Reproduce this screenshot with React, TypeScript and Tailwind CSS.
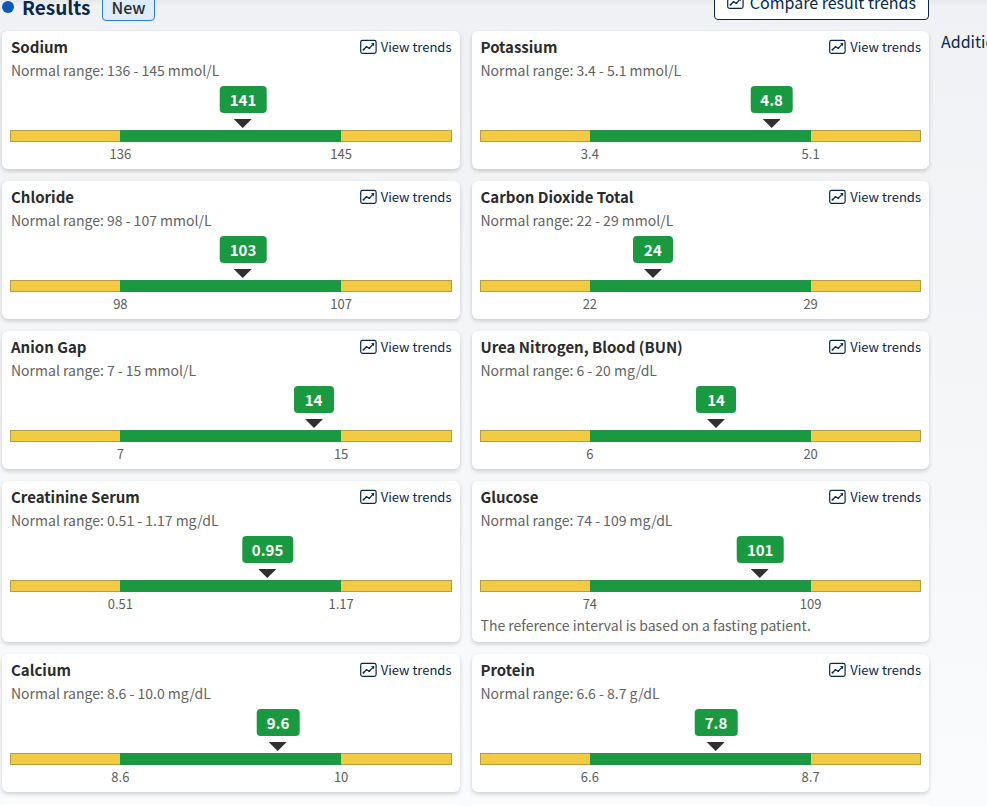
type LabResult = {
  name: string;
  low: number;
  high: number;
  value: number;
  unit: string;
  range: string;
  note?: string;
};

const RESULTS: LabResult[] = [
  { name: "Sodium", low: 136, high: 145, value: 141, unit: "mmol/L", range: "136 - 145" },
  { name: "Potassium", low: 3.4, high: 5.1, value: 4.8, unit: "mmol/L", range: "3.4 - 5.1" },
  { name: "Chloride", low: 98, high: 107, value: 103, unit: "mmol/L", range: "98 - 107" },
  { name: "Carbon Dioxide Total", low: 22, high: 29, value: 24, unit: "mmol/L", range: "22 - 29" },
  { name: "Anion Gap", low: 7, high: 15, value: 14, unit: "mmol/L", range: "7 - 15" },
  { name: "Urea Nitrogen, Blood (BUN)", low: 6, high: 20, value: 14, unit: "mg/dL", range: "6 - 20" },
  { name: "Creatinine Serum", low: 0.51, high: 1.17, value: 0.95, unit: "mg/dL", range: "0.51 - 1.17" },
  {
    name: "Glucose",
    low: 74,
    high: 109,
    value: 101,
    unit: "mg/dL",
    range: "74 - 109",
    note: "The reference interval is based on a fasting patient.",
  },
  { name: "Calcium", low: 8.6, high: 10, value: 9.6, unit: "mg/dL", range: "8.6 - 10.0" },
  { name: "Protein", low: 6.6, high: 8.7, value: 7.8, unit: "g/dL", range: "6.6 - 8.7" },
];

function TrendIcon() {
  return (
    <svg width="17" height="16" viewBox="0 0 17 16" fill="none" stroke="currentColor" aria-hidden="true" className="shrink-0">
      <rect x="0.7" y="1.4" width="15.4" height="13" rx="1.8" strokeWidth="1.2" />
      <path d="M3.4 10.8 6.5 7.8 9.3 9.2 13 5.4" strokeWidth="1.2" />
      <circle cx="3.5" cy="10.7" r="1" fill="currentColor" stroke="none" />
      <circle cx="6.5" cy="7.9" r="0.9" fill="currentColor" stroke="none" />
      <circle cx="9.3" cy="9.2" r="0.9" fill="currentColor" stroke="none" />
      <path d="m11 4.2 3.2-.2-.2 3.2Z" fill="currentColor" stroke="none" />
    </svg>
  );
}

function RangeBar({ low, high, value }: { low: number; high: number; value: number }) {
  // the normal range fills the middle half of the bar
  const position = 25 + ((value - low) / (high - low)) * 50;

  return (
    <div>
      <div className="flex w-fit -translate-x-1/2 flex-col items-center gap-1.5" style={{ marginLeft: `${position}%` }}>
        <span className="min-w-10 rounded bg-[#1a9a40] px-2.5 text-center text-[15px] leading-[27px] font-bold text-white">
          {value}
        </span>
        <svg width="18" height="9" viewBox="0 0 18 9" fill="#303030" aria-hidden="true">
          <path d="M0 0h18L9 9Z" />
        </svg>
      </div>
      <div className="mt-0.5 grid h-3 grid-cols-[1fr_2fr_1fr]">
        <div className="border border-r-0 border-[#b59d45] bg-[#f2cb43]" />
        <div className="border-y border-[#27904a] bg-[#1a9a40]" />
        <div className="border border-l-0 border-[#b59d45] bg-[#f2cb43]" />
      </div>
      <div className="mt-0.5 grid grid-cols-2 text-center text-[13px] leading-5 text-[#5c5c5c]">
        <span>{low}</span>
        <span>{high}</span>
      </div>
    </div>
  );
}

function ResultCard({ result }: { result: LabResult }) {
  return (
    <article className="rounded-md bg-white px-2 pt-1 pb-[5px] shadow-[0_2px_4px_rgba(0,0,0,0.18)]">
      <div className="flex items-center justify-between">
        <h2 className="pl-px text-[15px] leading-6 font-bold text-[#2b2b2b]">{result.name}</h2>
        <a href="#trends" className="flex items-center gap-1 text-[13px] leading-6 text-[#06284f]">
          <TrendIcon />
          View trends
        </a>
      </div>
      <p className="mb-1 pl-px text-sm leading-[23px] text-[#636363]">
        Normal range: {result.range} {result.unit}
      </p>
      <RangeBar low={result.low} high={result.high} value={result.value} />
      {result.note ? <p className="pl-px text-sm leading-[23px] text-[#636363]">{result.note}</p> : null}
    </article>
  );
}

export default function App() {
  return (
    <div className="min-h-screen overflow-hidden bg-linear-to-b from-[#eff1f4] to-[#f9fbfc] pl-0.5 font-['Noto_Sans_CJK_SC','Source_Sans_Pro',sans-serif]">
      <div className="-ml-0.5 h-1.5 bg-linear-to-b from-[#e6e8eb] to-[#eff1f4]" />
      <div className="-mt-1.5 flex gap-3">
        <main className="min-w-0 flex-1">
          <header className="-mt-4 flex h-[37px] items-end justify-between">
            <div className="flex items-center">
              <span className="size-3 rounded-full bg-[#0a57b8]" />
              <h1 className="ml-2 text-[19px] leading-7 font-bold text-[#06284f]">Results</h1>
              <span className="ml-3 rounded border border-[#2b82da] bg-[#deedfb] px-2 text-base leading-[26px] font-medium text-[#2b2b2b]">
                New
              </span>
            </div>
            <button
              type="button"
              className="mb-px flex h-9 items-center gap-1.5 rounded border border-[#06284f] bg-white px-3 text-base text-[#06284f]"
            >
              <TrendIcon />
              Compare result trends
            </button>
          </header>
          <div className="mt-2.5 grid grid-cols-2 gap-3">
            {RESULTS.map((result) => (
              <ResultCard key={result.name} result={result} />
            ))}
            <div className="h-0.5 rounded-t-md bg-white" />
            <div className="h-0.5 rounded-t-md bg-white" />
          </div>
        </main>
        <aside className="w-[46px] overflow-hidden pt-[29px] whitespace-nowrap">
          <h2 className="text-base leading-6 text-[#06284f]">Additional</h2>
        </aside>
      </div>
    </div>
  );
}
